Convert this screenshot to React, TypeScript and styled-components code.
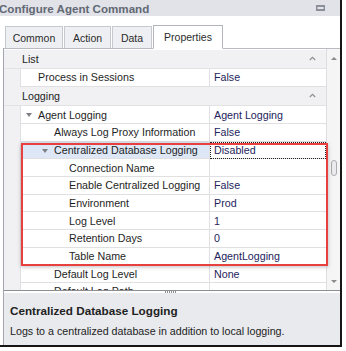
import { createGlobalStyle, styled } from 'styled-components';

const GlobalStyle = createGlobalStyle`
  html, body {
    margin: 0;
    padding: 0;
    background: #fff;
  }
  body {
    font-family: 'Liberation Sans', Arial, sans-serif;
    font-size: 10.7px;
    color: #1e1e1e;
  }
`;

type Row =
  | { kind: 'cat'; label: string }
  | {
      kind: 'prop';
      level: number;
      label: string;
      value: string;
      expanded?: boolean;
      selected?: boolean;
    };

const rows: Row[] = [
  { kind: 'cat', label: 'List' },
  { kind: 'prop', level: 1, label: 'Process in Sessions', value: 'False' },
  { kind: 'cat', label: 'Logging' },
  { kind: 'prop', level: 1, label: 'Agent Logging', value: 'Agent Logging', expanded: true },
  { kind: 'prop', level: 2, label: 'Always Log Proxy Information', value: 'False' },
  {
    kind: 'prop',
    level: 2,
    label: 'Centralized Database Logging',
    value: 'Disabled',
    expanded: true,
    selected: true,
  },
  { kind: 'prop', level: 3, label: 'Connection Name', value: '' },
  { kind: 'prop', level: 3, label: 'Enable Centralized Logging', value: 'False' },
  { kind: 'prop', level: 3, label: 'Environment', value: 'Prod' },
  { kind: 'prop', level: 3, label: 'Log Level', value: '1' },
  { kind: 'prop', level: 3, label: 'Retention Days', value: '0' },
  { kind: 'prop', level: 3, label: 'Table Name', value: 'AgentLogging' },
  { kind: 'prop', level: 2, label: 'Default Log Level', value: 'None' },
  { kind: 'prop', level: 2, label: 'Default Log Path', value: '' },
];

const tabs = [
  { label: 'Common', width: 58 },
  { label: 'Action', width: 47 },
  { label: 'Data', width: 40 },
  { label: 'Properties', width: 70, active: true },
];
const indent = [0, 17, 33, 48];

const Chevron = () => (
  <svg width="7" height="5" viewBox="0 0 7 5">
    <polyline points="0.8,4 3.5,1.3 6.2,4" fill="none" stroke="#8e9096" strokeWidth="1.2" />
  </svg>
);

export default function App() {
  return (
    <>
      <GlobalStyle />
      <Window>
        <TitleBar>
          <Title>Configure Agent Command</Title>
          <svg width="9" height="6" viewBox="0 0 9 6">
            <rect x="0" y="0" width="9" height="6" fill="#8a8f99" />
            <rect x="1.5" y="2" width="6" height="2" fill="#e4e6ea" />
          </svg>
        </TitleBar>

        <TabStrip>
          {tabs.map((t) => (
            <Tab key={t.label} $active={!!t.active} $width={t.width}>
              {t.label}
            </Tab>
          ))}
        </TabStrip>

        <Panel>
          <GridArea>
            <GridBody>
              {rows.map((r, i) =>
                r.kind === 'cat' ? (
                  <CategoryRow key={i}>
                    <span>{r.label}</span>
                    <Chevron />
                  </CategoryRow>
                ) : (
                  <PropRow key={i}>
                    <Gutter />
                    <NameCell $indent={indent[r.level]} $selected={!!r.selected}>
                      {r.expanded && <Expander $left={indent[r.level] - 12} />}
                      {r.label}
                    </NameCell>
                    <ValueCell $focused={!!r.selected}>{r.value}</ValueCell>
                  </PropRow>
                )
              )}
            </GridBody>
            <ScrollBar>
              <Arrow $down={false} />
              <Thumb />
              <Arrow $down />
            </ScrollBar>
            <Highlight />
          </GridArea>

          <Splitter>
            <Grip />
          </Splitter>

          <Description>
            <DescTitle>Centralized Database Logging</DescTitle>
            <DescText>Logs to a centralized database in addition to local logging.</DescText>
          </Description>
        </Panel>
      </Window>
    </>
  );
}

const Window = styled.div`
  width: 342px;
  height: 347px;
  box-sizing: border-box;
  border-right: 2px solid #161616;
  border-bottom: 2px solid #161616;
  display: flex;
  flex-direction: column;
  background: #fff;
`;

const TitleBar = styled.div`
  height: 16px;
  flex-shrink: 0;
  background: #e1e3e8;
  display: flex;
  align-items: center;
  justify-content: space-between;
  padding: 0 15px 0 0;
`;

const Title = styled.div`
  margin-left: -1px;
  font-weight: bold;
  font-size: 11.6px;
  color: #626874;
  white-space: nowrap;
`;

const TabStrip = styled.div`
  height: 32px;
  flex-shrink: 0;
  box-sizing: border-box;
  display: flex;
  align-items: flex-end;
  gap: 1px;
  padding-left: 5px;
`;

const Tab = styled.div<{ $active: boolean; $width: number }>`
  box-sizing: border-box;
  width: ${(p) => p.$width}px;
  height: ${(p) => (p.$active ? '24px' : '22px')};
  margin-bottom: ${(p) => (p.$active ? '-1px' : '0')};
  position: relative;
  border: 1px solid ${(p) => (p.$active ? '#b2b5bc' : '#c6c9cf')};
  border-bottom: ${(p) => (p.$active ? '1px solid #fff' : 'none')};
  background: ${(p) => (p.$active ? '#fff' : '#eeeff2')};
  color: #2b2b2b;
  font-size: 10.5px;
  display: flex;
  align-items: center;
  justify-content: center;
  padding-top: ${(p) => (p.$active ? '0' : '1px')};
`;

const Panel = styled.div`
  flex: 1;
  margin-left: 3px;
  border-left: 1px solid #a3a6ad;
  border-top: 1px solid #b8bbc1;
  display: flex;
  flex-direction: column;
  min-height: 0;
`;

const GridArea = styled.div`
  position: relative;
  height: 241px;
  flex-shrink: 0;
  display: flex;
`;

const GridBody = styled.div`
  flex: 1;
  overflow: hidden;
  padding-top: 0.5px;
`;

const CategoryRow = styled.div`
  box-sizing: border-box;
  height: 19.5px;
  background: #f1f1f3;
  border-bottom: 1px solid #e2e2e4;
  display: flex;
  align-items: center;
  justify-content: space-between;
  padding: 0 10px 0 18px;
`;

const PropRow = styled.div`
  height: 17.7px;
  display: grid;
  grid-template-columns: 16px 190px 1fr;
`;

const Gutter = styled.div`
  background: #f1f1f3;
`;

const NameCell = styled.div<{ $indent: number; $selected: boolean }>`
  position: relative;
  box-sizing: border-box;
  border-left: 1px solid #e0e0e2;
  border-right: 1px solid #e0e0e2;
  border-bottom: 1px solid #e0e0e2;
  background: ${(p) => (p.$selected ? '#dde7f6' : '#fff')};
  padding-left: ${(p) => p.$indent}px;
  display: flex;
  align-items: center;
  white-space: nowrap;
  overflow: hidden;
`;

const Expander = styled.span<{ $left: number }>`
  position: absolute;
  left: ${(p) => p.$left}px;
  top: 7px;
  width: 0;
  height: 0;
  border-left: 3px solid transparent;
  border-right: 3px solid transparent;
  border-top: 4px solid #7d7f85;
`;

const ValueCell = styled.div<{ $focused: boolean }>`
  box-sizing: border-box;
  border-bottom: 1px solid #e0e0e2;
  padding-left: 4px;
  display: flex;
  align-items: center;
  color: #24245c;
  white-space: nowrap;
  outline: ${(p) => (p.$focused ? '1px dotted #222' : 'none')};
  outline-offset: -1px;
`;

const ScrollBar = styled.div`
  width: 14px;
  box-sizing: border-box;
  border-left: 1px solid #dedee0;
  background: #f5f5f6;
  display: flex;
  flex-direction: column;
  align-items: center;
  padding: 8px 0 7px 1px;
`;

const Arrow = styled.span<{ $down: boolean }>`
  width: 0;
  height: 0;
  border-left: 3px solid transparent;
  border-right: 3px solid transparent;
  ${(p) => (p.$down ? 'border-top: 3px solid #8a8a8e;' : 'border-bottom: 3px solid #8a8a8e;')}
  ${(p) => (p.$down ? 'margin-top: auto;' : '')}
`;

const Thumb = styled.div`
  margin-top: 100px;
  width: 6px;
  height: 16px;
  box-sizing: border-box;
  border: 1px solid #a9abb0;
  border-radius: 3px;
  background: #ebebed;
`;

const Highlight = styled.div`
  position: absolute;
  left: 17px;
  top: 94px;
  width: 307px;
  height: 123px;
  box-sizing: border-box;
  border: 2px solid #e8403f;
  box-shadow: 0 1px 4px rgba(0, 0, 0, 0.25);
  pointer-events: none;
`;

const Splitter = styled.div`
  height: 3px;
  flex-shrink: 0;
  box-sizing: border-box;
  border-top: 1px solid #8c8e93;
  background: #fff;
  display: flex;
  justify-content: center;
`;

const Grip = styled.div`
  width: 11px;
  height: 2px;
  margin-left: -4px;
  background: repeating-linear-gradient(90deg, #8c8e93 0 1px, transparent 1px 2px);
`;

const Description = styled.div`
  flex: 1;
  background: #e9eaee;
  padding: 10px 0 0 6px;
`;

const DescTitle = styled.div`
  font-weight: bold;
  font-size: 11.7px;
  color: #222;
  line-height: 15px;
`;

const DescText = styled.div`
  margin-top: 6px;
  font-size: 10.7px;
  color: #222;
  line-height: 14px;
`;
